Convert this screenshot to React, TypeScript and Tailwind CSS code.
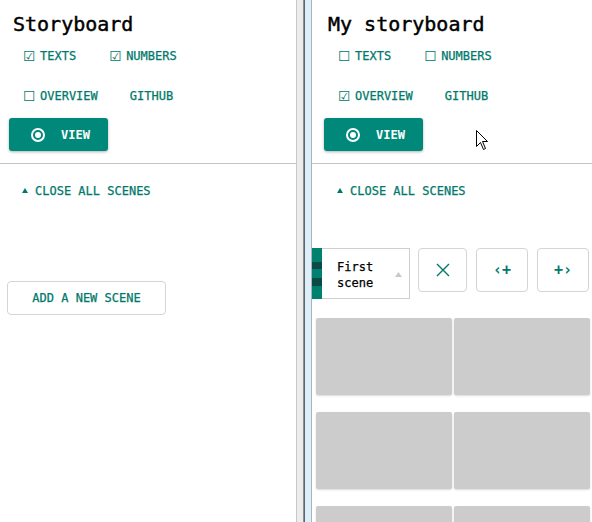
import React from "react";

function Box({ checked }: { checked: boolean }) {
  return (
    <span className="inline-block w-[17px] font-['DejaVu_Sans',sans-serif] text-[14px] leading-none [-webkit-text-stroke:0px]">
      {checked ? "☑" : "☐"}
    </span>
  );
}

function Radio() {
  return (
    <svg width="14" height="14" viewBox="0 0 14 14">
      <circle cx="7" cy="7" r="6" fill="none" stroke="white" strokeWidth="2" />
      <circle cx="7" cy="7" r="3" fill="white" />
    </svg>
  );
}

function Header({
  title,
  texts,
  numbers,
  overview,
  shift,
}: {
  title: string;
  texts: boolean;
  numbers: boolean;
  overview: boolean;
  shift: boolean;
}) {
  return (
    <div>
      <div className={shift ? "pl-[3px]" : ""}>
        <h1 className="mt-[10px] pl-[13px] text-[20px] leading-[28px] text-black [-webkit-text-stroke:0.45px_black]">
          {title}
        </h1>
        <div className="flex h-[36px] items-center gap-[33px] pl-[23px] text-[12px] text-[#00796b]">
          <span className="flex items-center">
            <Box checked={texts} />
            TEXTS
          </span>
          <span className="flex items-center">
            <Box checked={numbers} />
            NUMBERS
          </span>
        </div>
        <div className="mt-[4px] flex h-[36px] items-center gap-[32px] pl-[23px] text-[12px] text-[#00796b]">
          <span className="flex items-center">
            <Box checked={overview} />
            OVERVIEW
          </span>
          <span>GITHUB</span>
        </div>
        <div className="ml-[9px] mt-[4px] flex h-[33px] w-[99px] items-center rounded-[3px] bg-[#00897b] pl-[22px] shadow-[0_1px_3px_rgba(0,0,0,0.3)]">
          <Radio />
          <span className="ml-[16px] text-[12px] font-bold text-white [-webkit-text-stroke:0px]">VIEW</span>
        </div>
      </div>
      <div className="mt-[12px] h-px bg-[#c4c4c4]" />
      <div className={shift ? "pl-[3px]" : ""}>
        <div className="flex h-[52px] items-center pl-[22px] pt-[1px] text-[12px] text-[#00796b]">
          <svg width="6" height="5" viewBox="0 0 6 5" className="mr-[7px]">
            <polygon points="3,0 6,5 0,5" fill="#00796b" />
          </svg>
          CLOSE ALL SCENES
        </div>
      </div>
    </div>
  );
}

function Card() {
  return <div className="h-[77px] rounded-[2px] bg-[#cccccc] shadow-[0_1px_2px_rgba(0,0,0,0.15)]" />;
}

export default function App() {
  return (
    <div className="relative flex h-[522px] w-[592px] overflow-hidden bg-white font-['DejaVu_Sans_Mono',monospace] [-webkit-text-stroke:0.25px]">
      {/* left panel */}
      <div className="w-[296px] shrink-0">
        <Header title="Storyboard" texts numbers overview={false} shift={false} />
        <div className="ml-[7px] mt-[65px] flex h-[34px] w-[159px] items-center justify-center rounded-[4px] border border-[#d4d4d4] text-[12px] text-[#00796b]">
          ADD A NEW SCENE
        </div>
      </div>

      {/* divider */}
      <div className="flex h-full shrink-0">
        <div className="w-px bg-[#c8c8c8]" />
        <div className="w-[6px] bg-[#ececec]" />
        <div className="w-px bg-[#8a9096]" />
        <div className="w-px bg-[#5c6670]" />
        <div className="w-[6px] bg-[#dceff9]" />
        <div className="w-px bg-[#a9b4bb]" />
      </div>

      {/* right panel */}
      <div className="w-[280px] shrink-0">
        <Header title="My storyboard" texts={false} numbers={false} overview shift />
        <div className="mt-[32px] flex items-start">
          <div className="flex h-[51px] w-[98px] shrink-0">
            <div className="flex w-[10px] flex-col bg-[#00806f]">
              <div className="h-[14px]" />
              <div className="h-[7px] bg-[#0b4a47]" />
              <div className="h-[9px]" />
              <div className="h-[8px] bg-[#0b4a47]" />
            </div>
            <div className="flex flex-1 items-center border border-l-0 border-[#cfcfcf] pl-[15px] pr-[7px] pt-[2px]">
              <div className="flex-1 text-[12px] leading-[16px] text-black">
                First
                <br />
                scene
              </div>
              <svg width="7" height="5" viewBox="0 0 7 5">
                <polygon points="3.5,0 7,5 0,5" fill="#c8c8c8" />
              </svg>
            </div>
          </div>
          <div className="ml-[8px] flex h-[44px] w-[49px] items-center justify-center rounded-[4px] border border-[#d4d4d4]">
            <svg width="14" height="14" viewBox="0 0 14 14">
              <path d="M1 1 L13 13 M13 1 L1 13" stroke="#00796b" strokeWidth="1.4" />
            </svg>
          </div>
          <div className="ml-[9px] flex h-[44px] w-[52px] items-center justify-center rounded-[4px] border border-[#d4d4d4] text-[15px] font-bold text-[#00796b] [-webkit-text-stroke:0px]">
            ‹+
          </div>
          <div className="ml-[9px] flex h-[44px] w-[52px] items-center justify-center rounded-[4px] border border-[#d4d4d4] text-[15px] font-bold text-[#00796b] [-webkit-text-stroke:0px]">
            +›
          </div>
        </div>
        <div className="ml-[4px] mt-[19px] grid w-[274px] grid-cols-2 gap-x-[2px] gap-y-[17px]">
          <Card />
          <Card />
          <Card />
          <Card />
          <Card />
          <Card />
        </div>
      </div>

      {/* mouse cursor */}
      <svg
        className="absolute left-[476px] top-[130px]"
        width="13"
        height="21"
        viewBox="0 0 13 21"
      >
        <path
          d="M0.5 0.5 L0.5 16.5 L4.5 12.5 L7.5 19.5 L9.5 18.5 L6.5 11.5 L11.5 11.5 Z"
          fill="white"
          stroke="black"
          strokeWidth="1"
        />
      </svg>
    </div>
  );
}
